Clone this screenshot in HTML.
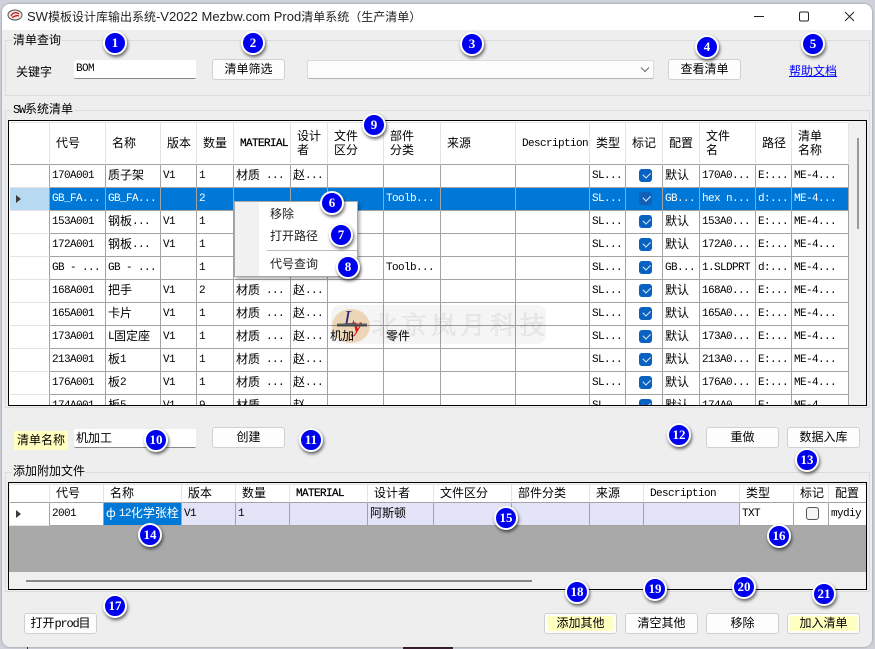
<!DOCTYPE html>
<html lang="zh">
<head>
<meta charset="utf-8">
<title>SW模板设计库输出系统</title>
<style>
html,body{margin:0;padding:0}
body{width:875px;height:649px;overflow:hidden;position:relative;background:#cfd1da;font-family:"Liberation Mono","WenQuanYi Zen Hei","Noto Sans CJK SC",monospace;font-size:12px;color:#000}
div,span,a,svg{position:absolute;box-sizing:border-box}
td span,td i{position:static}
.win{left:2px;top:4px;width:870px;height:643px;background:#eeeeee;border-radius:8px;box-shadow:0 0 2px rgba(0,0,0,.35);overflow:hidden}
.tb{left:2px;top:4px;width:870px;height:26px;background:#fff;border-radius:8px 8px 0 0}
.ttl{left:27px;top:9px;font:13px/16px "Liberation Sans","Noto Sans CJK SC",sans-serif;white-space:nowrap;color:#222}
.ttl b{font-weight:normal;font-size:12px}
.grp{border:1px solid #dcdcdc}
.lab{background:#eee;padding:0 1px;line-height:14px;white-space:nowrap;font-family:"WenQuanYi Zen Hei","Noto Sans CJK SC",sans-serif}
.lat{font:12px/12px "Liberation Mono",monospace;letter-spacing:-1.2px;font-style:normal}
.t{white-space:nowrap;line-height:14px;font-family:"WenQuanYi Zen Hei","Noto Sans CJK SC",sans-serif}
.inp{background:#fff;border-bottom:1px solid #8a8a8a;height:19px;width:122px;left:74px;border-radius:2px}
.btn{width:73px;height:21px;background:#fdfdfd;border:1px solid #d0d0d0;border-radius:3px;text-align:center;line-height:17px;white-space:nowrap;font-family:"WenQuanYi Zen Hei","Noto Sans CJK SC",sans-serif}
.btn.y{background:#ffffc0;box-shadow:inset 0 0 0 2px #fdfdfd}
.m{font-size:11px;letter-spacing:-.6px}
.box{left:8px;width:859px;border:1px solid #000;background:#fff;overflow:hidden}
table{position:absolute;border-collapse:separate;border-spacing:0;table-layout:fixed}
td{box-sizing:border-box;padding:1px 0 0 2px;height:23px;line-height:21px;border-right:1px solid #a3a3a3;border-bottom:1px solid #a3a3a3;white-space:nowrap;overflow:hidden;font-size:11px;letter-spacing:-.6px;vertical-align:middle}
td b{font:12px/12px "WenQuanYi Zen Hei","Noto Sans CJK SC",sans-serif;letter-spacing:0;position:relative;top:1px}
td:first-child{border-bottom-color:#e4e4e4;padding:0}
tr.h td{border-right-color:#e4e4e4;padding:0 0 0 6px;line-height:12px;border-top:1px solid #e4e4e4}
tr.h b{top:0}
tr.h td:first-child{border-bottom-color:#a3a3a3;padding:0}
tr.h2 td{height:19px}
tr.s td{background:#0078d7;color:#fff}
tr.s td:first-child{background:#b8d9f2}
.ck{display:block;width:13px;height:13px;margin-left:11px;background:#0a62c0;border-radius:3px;position:relative;top:-1px}
.ck::after{content:"";position:absolute;left:3.5px;top:2.5px;width:6px;height:3.5px;border-left:1px solid #dfeeff;border-bottom:1px solid #dfeeff;transform:rotate(-45deg)}
tr.s .ck{background:#1060b6}
.no{display:block;width:13px;height:13px;margin-left:10px;background:#f6f6f6;border:1px solid #555;border-radius:3px;position:relative;top:-1px}
.ar{display:block;width:0;height:0;margin-left:6px;border-left:5px solid #3c3c3c;border-top:4.5px solid transparent;border-bottom:4.5px solid transparent}
.n{width:24px;height:24px;border-radius:50%;background:#0000f0;border:2px solid #fff;box-shadow:1px 2px 3px rgba(0,0,0,.6);color:#fff;font:bold 13px/20px "Liberation Serif",serif;text-align:center}
.mi{left:270px;font:12px/14px "WenQuanYi Zen Hei","Noto Sans CJK SC",sans-serif;color:#222;white-space:nowrap}
.wm{mix-blend-mode:multiply}
</style>
</head>
<body>
<div style="left:403px;top:647px;width:50px;height:2px;background:#3a2030"></div>
<div style="left:27px;top:647px;width:1px;height:2px;background:#333"></div>
<div class="win"></div>
<div class="tb"></div>
<svg style="left:7px;top:8px" width="16" height="14" viewBox="0 0 16 14"><ellipse cx="8" cy="7" rx="7" ry="5" fill="#f3e3e3" stroke="#555" stroke-width="1"/><path d="M4 8C6 4 10 4 12 6M5 9.500C8 8 10 7 12 8" stroke="#c02020" stroke-width="1.300" fill="none"/></svg>
<div class="ttl">SW<b>模板设计库输出系统</b>-V2022 Mezbw.com Prod<b>清单系统（生产清单）</b></div>
<svg style="left:754px;top:11px" width="100" height="12" viewBox="0 0 100 12"><path d="M0 5.500H10" stroke="#222" stroke-width="1"/><rect x="45.500" y="1" width="9" height="9" rx="1.500" fill="none" stroke="#222" stroke-width="1"/><path d="M91 1L100 10M100 1L91 10" stroke="#222" stroke-width="1"/></svg>

<div class="grp" style="left:5px;top:40px;width:865px;height:56px"></div>
<div class="lab" style="left:12px;top:33px">清单查询</div>
<div class="t" style="left:16px;top:65px">关键字</div>
<div class="inp" style="top:60px"></div>
<div class="t m" style="left:76px;top:62px;font-family:'Liberation Mono',monospace">BOM</div>
<div class="btn" style="left:212px;top:59px">清单筛选</div>
<div style="left:307px;top:60px;width:347px;height:19px;background:#fcfcfc;border:1px solid #dadada;border-bottom-color:#b4b4b4;border-radius:2px"></div>
<svg style="left:640px;top:66px" width="10" height="7" viewBox="0 0 10 7"><path d="M1 1.500L5 5.500L9 1.500" fill="none" stroke="#666" stroke-width="1"/></svg>
<div class="btn" style="left:668px;top:59px">查看清单</div>
<a class="t" style="left:789px;top:64px;color:#0000ff;text-decoration:underline">帮助文档</a>

<div class="grp" style="left:5px;top:110px;width:865px;height:298px"></div>
<div class="lab" style="left:12px;top:102px"><i class="lat">SW</i>系统清单</div>

<div class="box" style="top:120px;height:286px">
<div style="left:840px;top:0;width:18px;height:284px;background:#f0f0f0"></div>
<div style="left:848px;top:17px;width:2px;height:91px;background:#999"></div>
<table style="left:1px;top:1px;width:839px">
<colgroup><col style="width:40px"><col style="width:56px"><col style="width:55px"><col style="width:36px"><col style="width:37px"><col style="width:57px"><col style="width:37px"><col style="width:56px"><col style="width:57px"><col style="width:75px"><col style="width:74px"><col style="width:36px"><col style="width:37px"><col style="width:37px"><col style="width:56px"><col style="width:36px"><col style="width:57px"></colgroup>
<tr class="h" style="height:43px"><td style="height:43px"></td><td><b>代号</b></td><td><b>名称</b></td><td><b>版本</b></td><td><b>数量</b></td><td style="-webkit-text-stroke:.25px #000">MATERIAL</td><td><b>设计<br>者</b></td><td><b>文件<br>区分</b></td><td><b>部件<br>分类</b></td><td><b>来源</b></td><td>Description</td><td><b>类型</b></td><td><b>标记</b></td><td><b>配置</b></td><td><b>文件<br>名</b></td><td><b>路径</b></td><td><b>清单<br>名称</b></td></tr>
<tr><td></td><td>170A001</td><td><b>质子架</b></td><td>V1</td><td>1</td><td><b>材质</b> ...</td><td><b>赵</b>...</td><td></td><td></td><td></td><td></td><td>SL...</td><td><span class="ck"></span></td><td><b>默认</b></td><td>170A0...</td><td>E:...</td><td>ME-4...</td></tr>
<tr class="s"><td><span class="ar"></span></td><td>GB_FA...</td><td>GB_FA...</td><td></td><td>2</td><td></td><td></td><td></td><td>Toolb...</td><td></td><td></td><td>SL...</td><td><span class="ck"></span></td><td>GB...</td><td>hex n...</td><td>d:...</td><td>ME-4...</td></tr>
<tr><td></td><td>153A001</td><td><b>钢板</b>...</td><td>V1</td><td>1</td><td></td><td></td><td></td><td></td><td></td><td></td><td>SL...</td><td><span class="ck"></span></td><td><b>默认</b></td><td>153A0...</td><td>E:...</td><td>ME-4...</td></tr>
<tr><td></td><td>172A001</td><td><b>钢板</b>...</td><td>V1</td><td>1</td><td></td><td></td><td></td><td></td><td></td><td></td><td>SL...</td><td><span class="ck"></span></td><td><b>默认</b></td><td>172A0...</td><td>E:...</td><td>ME-4...</td></tr>
<tr><td></td><td>GB - ...</td><td>GB - ...</td><td></td><td>1</td><td></td><td></td><td></td><td>Toolb...</td><td></td><td></td><td>SL...</td><td><span class="ck"></span></td><td>GB...</td><td>1.SLDPRT</td><td>d:...</td><td>ME-4...</td></tr>
<tr><td></td><td>168A001</td><td><b>把手</b></td><td>V1</td><td>2</td><td><b>材质</b> ...</td><td><b>赵</b>...</td><td></td><td></td><td></td><td></td><td>SL...</td><td><span class="ck"></span></td><td><b>默认</b></td><td>168A0...</td><td>E:...</td><td>ME-4...</td></tr>
<tr><td></td><td>165A001</td><td><b>卡片</b></td><td>V1</td><td>1</td><td><b>材质</b> ...</td><td><b>赵</b>...</td><td></td><td></td><td></td><td></td><td>SL...</td><td><span class="ck"></span></td><td><b>默认</b></td><td>165A0...</td><td>E:...</td><td>ME-4...</td></tr>
<tr><td></td><td>173A001</td><td>L<b>固定座</b></td><td>V1</td><td>1</td><td><b>材质</b> ...</td><td><b>赵</b>...</td><td><b>机加</b></td><td><b>零件</b></td><td></td><td></td><td>SL...</td><td><span class="ck"></span></td><td><b>默认</b></td><td>173A0...</td><td>E:...</td><td>ME-4...</td></tr>
<tr><td></td><td>213A001</td><td><b>板</b>1</td><td>V1</td><td>1</td><td><b>材质</b> ...</td><td><b>赵</b>...</td><td></td><td></td><td></td><td></td><td>SL...</td><td><span class="ck"></span></td><td><b>默认</b></td><td>213A0...</td><td>E:...</td><td>ME-4...</td></tr>
<tr><td></td><td>176A001</td><td><b>板</b>2</td><td>V1</td><td>1</td><td><b>材质</b> ...</td><td><b>赵</b>...</td><td></td><td></td><td></td><td></td><td>SL...</td><td><span class="ck"></span></td><td><b>默认</b></td><td>176A0...</td><td>E:...</td><td>ME-4...</td></tr>
<tr><td></td><td>174A001</td><td><b>板</b>5</td><td>V1</td><td>9</td><td><b>材质</b> ...</td><td><b>赵</b>...</td><td></td><td></td><td></td><td></td><td>SL...</td><td><span class="ck"></span></td><td><b>默认</b></td><td>174A0...</td><td>E:...</td><td>ME-4...</td></tr>
</table>
</div>

<!-- watermark -->
<div class="wm" style="left:331px;top:305px;width:215px;height:39px;background:#f5f5f5;border-radius:9px"></div>
<div class="wm" style="left:372px;top:309px;font:25px/30px 'Noto Serif CJK SC',serif;letter-spacing:4.5px;color:#f6f6f6;-webkit-text-stroke:.5px #e6e6e6;white-space:nowrap">北京岚月科技</div>
<svg class="wm" style="left:331px;top:306px" width="42" height="38" viewBox="0 0 42 38"><ellipse cx="20" cy="20" rx="19" ry="17" fill="#f7dfc0"/><text x="13" y="18" font-family="Liberation Serif,serif" font-style="italic" font-size="20" fill="#2a2a80">L</text><text x="22" y="26" font-family="Liberation Serif,serif" font-style="italic" font-weight="bold" font-size="20" fill="#e81010">y</text><path d="M6 19H36" stroke="#666" stroke-width="3"/></svg>

<!-- context menu -->
<div style="left:234px;top:201px;width:124px;height:76px;background:#fff;border:1px solid #a8a8a8;box-shadow:2px 2px 3px rgba(0,0,0,.3)"></div>
<div style="left:235px;top:202px;width:24px;height:74px;background:#f1f1f1"></div>
<div style="left:267px;top:250px;width:90px;height:1px;background:#bdbdbd"></div>
<div class="mi" style="top:207px">移除</div>
<div class="mi" style="top:229px">打开路径</div>
<div class="mi" style="top:257px">代号查询</div>

<div class="t" style="left:14px;top:431px;width:54px;height:19px;background:#ffffc0;padding:2px 0 0 3px">清单名称</div>
<div class="inp" style="top:429px"></div>
<div class="t" style="left:76px;top:431px">机加工</div>
<div class="btn" style="left:212px;top:427px">创建</div>
<div class="btn" style="left:706px;top:427px">重做</div>
<div class="btn" style="left:787px;top:427px">数据入库</div>

<div class="grp" style="left:5px;top:472px;width:865px;height:120px"></div>
<div class="lab" style="left:12px;top:464px">添加附加文件</div>

<div class="box" style="top:482px;height:108px;background:#f0f0f0">
<div style="left:0;top:43px;width:857px;height:46px;background:#a9a9a9"></div>
<div style="left:17px;top:97px;width:506px;height:2px;background:#888"></div>
<table style="left:1px;top:1px;width:857px">
<colgroup><col style="width:40px"><col style="width:54px"><col style="width:78px"><col style="width:54px"><col style="width:54px"><col style="width:78px"><col style="width:66px"><col style="width:78px"><col style="width:78px"><col style="width:54px"><col style="width:96px"><col style="width:54px"><col style="width:35px"><col style="width:38px"></colgroup>
<tr class="h h2" style="background:#fff;height:19px"><td></td><td><b>代号</b></td><td><b>名称</b></td><td><b>版本</b></td><td><b>数量</b></td><td style="-webkit-text-stroke:.25px #000">MATERIAL</td><td><b>设计者</b></td><td><b>文件区分</b></td><td><b>部件分类</b></td><td><b>来源</b></td><td>Description</td><td><b>类型</b></td><td><b>标记</b></td><td><b>配置</b></td></tr>
<tr style="background:#e3e4f7"><td style="background:#fff"><span class="ar"></span></td><td style="background:#fff">2001</td><td style="background:#0078d7;color:#fff"><b style="letter-spacing:3px">ф</b>12<b>化学张栓</b></td><td>V1</td><td>1</td><td></td><td><b>阿斯顿</b></td><td></td><td></td><td></td><td></td><td style="background:#fff">TXT</td><td style="background:#fff"><span class="no"></span></td><td style="background:#fff">mydiy</td></tr>
</table>
</div>

<div class="btn" style="left:24px;top:613px">打开<i class="lat">prod</i>目</div>
<div class="btn y" style="left:544px;top:613px">添加其他</div>
<div class="btn" style="left:625px;top:613px">清空其他</div>
<div class="btn" style="left:706px;top:613px">移除</div>
<div class="btn y" style="left:787px;top:613px">加入清单</div>

<div class="n" style="left:103px;top:31px">1</div>
<div class="n" style="left:241px;top:31px">2</div>
<div class="n" style="left:460px;top:32px">3</div>
<div class="n" style="left:695px;top:35px">4</div>
<div class="n" style="left:801px;top:32px">5</div>
<div class="n" style="left:320px;top:191px">6</div>
<div class="n" style="left:329px;top:223px">7</div>
<div class="n" style="left:336px;top:255px">8</div>
<div class="n" style="left:362px;top:113px">9</div>
<div class="n" style="left:144px;top:428px">10</div>
<div class="n" style="left:299px;top:428px">11</div>
<div class="n" style="left:667px;top:423px">12</div>
<div class="n" style="left:795px;top:448px">13</div>
<div class="n" style="left:138px;top:523px">14</div>
<div class="n" style="left:494px;top:506px">15</div>
<div class="n" style="left:767px;top:524px">16</div>
<div class="n" style="left:103px;top:594px">17</div>
<div class="n" style="left:565px;top:580px">18</div>
<div class="n" style="left:643px;top:577px">19</div>
<div class="n" style="left:732px;top:575px">20</div>
<div class="n" style="left:812px;top:582px">21</div>
</body>
</html>
